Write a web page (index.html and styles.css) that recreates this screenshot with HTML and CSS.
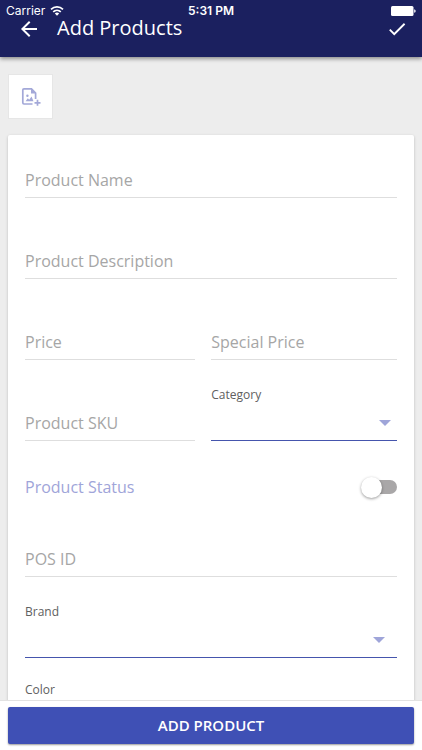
FILE: index.html
```html
<!DOCTYPE html>
<html lang="en">
<head>
<meta charset="utf-8">
<meta name="viewport" content="width=device-width, initial-scale=1">
<title>Add Products</title>
<link rel="stylesheet" href="styles.css">
</head>
<body>
<header class="app-bar">
  <div class="status-bar">
    <span class="carrier">Carrier
      <svg class="wifi" viewBox="0 0 14 10" aria-hidden="true"><path d="M1 3.400a8.600 8.600 0 0 1 12 0M3.200 5.800a5.500 5.500 0 0 1 7.600 0" fill="none" stroke="currentColor" stroke-width="1.700"/><path d="M4.800 7.500a3.200 3.200 0 0 1 4.400 0L7 9.800z" fill="currentColor"/></svg>
    </span>
    <span class="clock">5:31 PM</span>
    <svg class="battery" viewBox="0 0 25 10" aria-hidden="true"><rect width="22.5" height="10" rx="1.5" fill="currentColor"/><path d="M23.2 3.2q1.5.4 1.5 1.8t-1.5 1.8z" fill="currentColor"/></svg>
  </div>
  <button class="icon-button" type="button" aria-label="Back">
    <svg viewBox="0 0 24 24"><path d="M20 11H7.83l5.59-5.59L12 4l-8 8 8 8 1.41-1.41L7.83 13H20z" fill="currentColor"/></svg>
  </button>
  <h1 class="title">Add Products</h1>
  <button class="icon-button" type="submit" form="product" aria-label="Save">
    <svg viewBox="0 0 24 24"><path d="M9 16.17 4.83 12l-1.42 1.41L9 19 21 7l-1.41-1.41z" fill="currentColor"/></svg>
  </button>
</header>

<main class="content">
  <button class="add-image" type="button" aria-label="Add image">
    <svg viewBox="0 0 20 20" aria-hidden="true">
      <path d="M11.5 17H3a1.2 1.2 0 0 1-1.2-1.2V3A1.2 1.2 0 0 1 3 1.800h7.500L14.600 6v6" fill="none" stroke="currentColor" stroke-width="1.700"/>
      <path d="M10 1.500V6.600h5zM4.600 14.200l2.200-3 1.400 1.500 2.300-3.100 2 4.600z" fill="currentColor"/>
      <circle cx="6.400" cy="8.700" r="1.200" fill="currentColor"/>
      <path d="M16.500 12.800v6M13.500 15.800h6" stroke="currentColor" stroke-width="1.700"/>
    </svg>
  </button>

  <form class="card" id="product">
    <div class="fields">
      <div class="field wide"><input class="text-input" type="text" placeholder="Product Name" aria-label="Product Name"></div>
      <div class="field wide"><input class="text-input" type="text" placeholder="Product Description" aria-label="Product Description"></div>
      <div class="field"><input class="text-input" type="text" placeholder="Price" aria-label="Price"></div>
      <div class="field"><input class="text-input" type="text" placeholder="Special Price" aria-label="Special Price"></div>
      <div class="field"><input class="text-input" type="text" placeholder="Product SKU" aria-label="Product SKU"></div>
      <div class="field">
        <label class="label" for="category">Category</label>
        <select class="select" id="category"><option></option></select>
        <svg class="caret" viewBox="0 0 12 6" aria-hidden="true"><path d="M0 0h12L6 6z" fill="currentColor"/></svg>
      </div>
    </div>
    <div class="status-row">
      <label for="status">Product Status</label>
      <input class="switch" type="checkbox" role="switch" id="status">
    </div>
    <div class="field"><input class="text-input" type="text" placeholder="POS ID" aria-label="POS ID"></div>
    <div class="pickers">
      <div class="field">
        <label class="label" for="brand">Brand</label>
        <select class="select" id="brand"><option></option></select>
        <svg class="caret inset" viewBox="0 0 12 6" aria-hidden="true"><path d="M0 0h12L6 6z" fill="currentColor"/></svg>
      </div>
      <div class="field">
        <label class="label" for="color">Color</label>
        <select class="select" id="color"><option></option></select>
        <svg class="caret inset" viewBox="0 0 12 6" aria-hidden="true"><path d="M0 0h12L6 6z" fill="currentColor"/></svg>
      </div>
    </div>
  </form>
</main>

<footer class="footer">
  <button class="submit" type="submit" form="product">ADD PRODUCT</button>
</footer>
</body>
</html>
```
FILE: styles.css
```css
* {
  box-sizing: border-box;
}

body {
  margin: 0;
  height: 100vh;
  display: flex;
  flex-direction: column;
  background: #ededed;
  font-family: "Open Sans", "Noto Sans", sans-serif;
  font-size: 16px;
  color: #606060;
}

button,
input,
select {
  margin: 0;
  font: inherit;
}

/* App bar */
.app-bar {
  position: relative;
  z-index: 1;
  flex: none;
  display: flex;
  align-items: center;
  height: 57px;
  padding: 0 14px 0 17px;
  background: #1b205f;
  color: #fff;
  box-shadow: 0 2px 4px rgba(0, 0, 0, 0.4);
}

.status-bar {
  position: absolute;
  inset: 0 0 auto;
  display: grid;
  grid-template-columns: 1fr auto 1fr;
  align-items: center;
  height: 21px;
  padding: 0 6px;
  font-family: Inter, "Liberation Sans", sans-serif;
  font-size: 12px;
  pointer-events: none;
}

.carrier {
  display: flex;
  align-items: center;
  gap: 5px;
}

.clock {
  font-weight: 600;
}

.wifi {
  width: 14px;
  height: 10px;
}

.battery {
  justify-self: end;
  width: 25px;
  height: 10px;
}

.icon-button {
  display: flex;
  padding: 0;
  border: 0;
  background: none;
  color: inherit;
}

.icon-button svg {
  width: 24px;
  height: 24px;
}

.icon-button:last-child svg {
  width: 22px;
}

.title {
  flex: 1;
  margin: 0 16px;
  padding-bottom: 2px;
  font-size: 20px;
  font-weight: 400;
  line-height: 24px;
}

/* Scrolling content */
.content {
  flex: 1;
  min-height: 0;
  overflow: hidden;
  padding: 17px 8px 0;
}

.add-image {
  display: flex;
  align-items: center;
  justify-content: center;
  width: 45px;
  height: 45px;
  padding: 0;
  border: 1px solid #e6e6e6;
  background: #fff;
  color: #a3a8d8;
}

.add-image svg {
  width: 20px;
  height: 20px;
}

.card {
  margin-top: 16px;
  padding: 9px 17px;
  border-radius: 2px;
  background: #fff;
  box-shadow: 0 1px 3px rgba(0, 0, 0, 0.22);
}

.fields {
  display: grid;
  grid-template-columns: 11fr 12fr;
  gap: 27px 16px;
}

.wide {
  grid-column: 1 / -1;
}

.field {
  position: relative;
  display: flex;
  flex-direction: column;
  justify-content: flex-end;
  height: 54px;
}

.text-input {
  width: 100%;
  height: 36px;
  padding: 0;
  border: 0;
  border-bottom: 1px solid #dedede;
  border-radius: 0;
  outline: 0;
  background: none;
}

.text-input::placeholder {
  color: #a6a6a6;
  opacity: 1;
}

.label {
  font-size: 12px;
  line-height: 14px;
}

.select {
  width: 100%;
  height: 39px;
  border: 0 solid #4555ad;
  border-bottom-width: 1px;
  border-radius: 0;
  outline: 0;
  appearance: none;
  background: none;
}

.caret {
  position: absolute;
  right: 6px;
  bottom: 15px;
  width: 12px;
  height: 6px;
  color: #9fa5d9;
  pointer-events: none;
}

.caret.inset {
  right: 12px;
}

.status-row {
  display: flex;
  align-items: center;
  justify-content: space-between;
  height: 82px;
  padding-top: 10px;
  color: #9fa5d9;
}

.switch {
  appearance: none;
  display: flex;
  align-items: center;
  width: 36px;
  height: 14px;
  border-radius: 7px;
  background: linear-gradient(to right, transparent 10px, #a9a7a8 10px);
}

.switch::before {
  content: "";
  width: 21px;
  height: 21px;
  border-radius: 50%;
  background: #fff;
  box-shadow: 0 1px 3px rgba(0, 0, 0, 0.4);
}

.switch:checked {
  justify-content: flex-end;
  background: #9fa5d9;
}

.pickers {
  display: grid;
  gap: 24px;
  padding-top: 27px;
}

/* Bottom action */
.footer {
  z-index: 1;
  flex: none;
  padding: 6px 8px;
  border-top: 1px solid #e2e2e2;
  background: #fff;
}

.submit {
  display: block;
  width: 100%;
  height: 37px;
  padding: 0 0 2px;
  border: 0;
  border-radius: 2px;
  background: #3f50b5;
  color: #fff;
  font-size: 15px;
  font-weight: 600;
  box-shadow: 0 1px 2px rgba(0, 0, 0, 0.4);
}
```
